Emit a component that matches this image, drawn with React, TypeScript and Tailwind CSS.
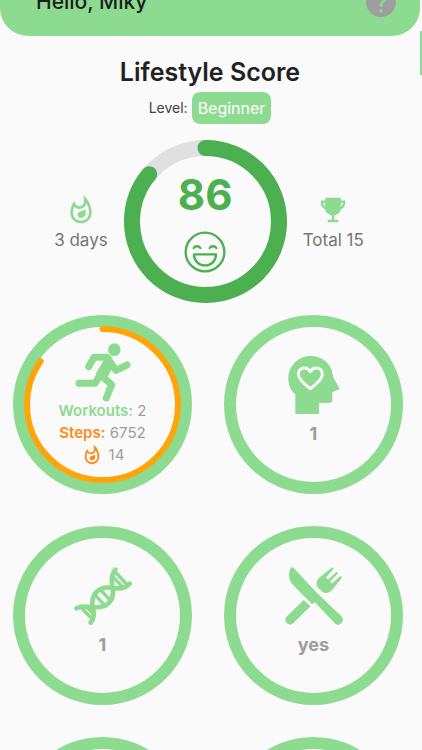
import { ReactNode } from "react";
import { IoTrophySharp } from "react-icons/io5";
import { MdHelp, MdOutlineWhatshot } from "react-icons/md";

type RingProps = {
  size: number;
  stroke: number;
  progress: number;
  color: string;
  track?: string;
};

// Progress ring, starts at the top and goes clockwise
const Ring = ({ size, stroke, progress, color, track }: RingProps) => {
  const r = (size - stroke) / 2;
  const length = 2 * Math.PI * r;
  return (
    <svg
      className="col-start-1 row-start-1"
      width={size}
      height={size}
      viewBox={`0 0 ${size} ${size}`}
      fill="none"
      strokeWidth={stroke}
    >
      {track && <circle cx={size / 2} cy={size / 2} r={r} stroke={track} />}
      <circle
        cx={size / 2}
        cy={size / 2}
        r={r}
        stroke={color}
        strokeLinecap="round"
        strokeDasharray={`${length * progress} ${length}`}
        transform={`rotate(-90 ${size / 2} ${size / 2})`}
      />
    </svg>
  );
};

const LaughIcon = () => (
  <svg
    width="42"
    height="42"
    viewBox="0 0 126 126"
    fill="none"
    stroke="#4caf50"
    strokeWidth="7"
    strokeLinecap="round"
    strokeLinejoin="round"
  >
    <circle cx="63" cy="63" r="58" />
    <path d="M29 51c4-7 16-7 20 0M77 51c4-7 16-7 20 0" />
    <path d="M30 70h66c0 20-14 33-33 33S30 90 30 70z" />
  </svg>
);

const RunnerIcon = () => (
  <svg
    className="-mb-0.5"
    width="56"
    height="59"
    viewBox="224 112 168 177"
    fill="none"
    stroke="#8ddb90"
    strokeWidth="21"
    strokeLinecap="round"
    strokeLinejoin="round"
  >
    <circle cx="342" cy="132" r="19" fill="#8ddb90" stroke="none" />
    <path d="M265 183l16-28h38" />
    <path d="M322 158l25 36 33-16" />
    <path d="M236 233h48l16-26" />
    <path d="M304 211l30 26-16 40" />
    <path
      d="M303 146h17c8 0 13 5 15 12l5 24-20 34-30-2-4-10 24-40z"
      fill="#8ddb90"
      stroke="none"
    />
  </svg>
);

const MindIcon = () => (
  <svg width="52" height="58" viewBox="51 48 156 174" fill="none">
    <path
      d="M73 222v-59c-14-12-21-28-21-47 0-38 29-68 67-68s66 28 67 62l20 37-22 10v22c0 6-4 10-10 10h-30v33z"
      fill="#8ddb90"
    />
    <path
      d="M118 146c-14-11-36-26-36-43 0-12 8-19 18-19 8 0 14 4 18 11 4-7 10-11 18-11 10 0 18 7 18 19 0 17-22 32-36 43z"
      stroke="#fafafa"
      strokeWidth="9"
      strokeLinejoin="round"
    />
  </svg>
);

const DnaIcon = () => (
  <svg
    width="58"
    height="58"
    viewBox="41 35 174 174"
    fill="none"
    stroke="#8ddb90"
    strokeLinecap="round"
  >
    <g strokeWidth="14">
      <path d="M49 159c16-10 32-2 48-4 38 5 66-14 60-57-3-18-6-38 8-55" />
      <path d="M91 202c14-17 9-32 6-47-6-38 18-65 60-57 18 3 37 2 51-13" />
    </g>
    <g strokeWidth="10">
      <path d="M106 121l29 31M121 104l30 32" />
      <path d="M66 161l27 27M82 158l16 17" />
      <path d="M160 67l26 27M165 50l33 36" />
    </g>
  </svg>
);

const MealIcon = () => (
  <svg width="58" height="58" viewBox="12 14 175 176" fill="#8ddb90">
    <path d="M28 18c3-4 7-4 10-1l70 75 74 71c7 7 7 15 1 21-6 7-15 7-21 0l-60-63-8 6-53-53C22 55 20 37 28 18z" />
    <path d="M68 114l21 19-52 51c-6 6-14 6-20 0s-6-14 0-20z" />
    <path d="M153 16c3-2 7 2 5 5l-22 25 7 6 23-22c4-3 8 2 5 5l-23 23 6 6 24-21c4-3 8 2 5 5l-27 34c-9 10-19 14-31 8l-15-15c-6-12-2-22 7-30z" />
  </svg>
);

const Stat = ({ icon, label }: { icon: ReactNode; label: string }) => (
  <div className="flex flex-col items-center text-[17px] leading-6 text-[#757575]">
    <div className="flex h-9 items-center text-[#8ddb90]">{icon}</div>
    <p>{label}</p>
  </div>
);

const Tile = ({ children }: { children?: ReactNode }) => (
  <button className="grid size-[179px] place-items-center rounded-full border-12 border-[#8ddb90]">
    {children}
  </button>
);

const IconTile = ({ icon, value }: { icon: ReactNode; value: string }) => (
  <Tile>
    <div className="flex flex-col items-center pb-1.5">
      <div className="flex h-16 items-start">{icon}</div>
      <p className="text-lg leading-7 font-bold text-[#9e9e9e]">{value}</p>
    </div>
  </Tile>
);

const App = () => {
  return (
    <div className="flex h-screen overflow-hidden bg-[#fafafa] font-['Inter',sans-serif]">
      <main className="min-w-0 flex-1">
        <header className="flex h-9 items-end justify-between rounded-b-[28px] bg-[#8ddb90] pr-[21px] pb-4 pl-9 text-[#1b1f1b]">
          <h2 className="text-[21px] leading-9 font-medium">Hello, Miky</h2>
          <button aria-label="Help" className="text-[#9e9e9e]">
            <MdHelp size={36} />
          </button>
        </header>

        <section className="flex flex-col items-center pt-5">
          <h1 className="text-[25px] leading-8 font-semibold text-[#212121]">
            Lifestyle Score
          </h1>
          <div className="mt-1 flex items-center gap-1 text-sm text-[#424242]">
            <span>Level:</span>
            <span className="rounded-lg bg-[#8ddb90] px-1.5 py-1 text-base leading-6 text-white">
              Beginner
            </span>
          </div>
        </section>

        <section className="mt-4 flex items-center justify-center gap-4 pr-0.5">
          <Stat icon={<MdOutlineWhatshot size={32} />} label="3 days" />
          <div className="grid place-items-center">
            <Ring
              size={163}
              stroke={16}
              progress={0.86}
              color="#4caf50"
              track="#e0e0e0"
            />
            <div className="col-start-1 row-start-1 flex flex-col items-center gap-3">
              <p className="text-[42px] leading-12 font-bold text-[#4caf50]">
                86
              </p>
              <LaughIcon />
            </div>
          </div>
          <Stat icon={<IoTrophySharp size={28} />} label="Total 15" />
        </section>

        <section className="mt-3 grid grid-cols-[auto_auto] justify-center gap-8 pr-1">
          <Tile>
            <div className="-m-1 grid place-items-center">
              <Ring size={157} stroke={6} progress={0.846} color="#ffa50a" />
              <div className="col-start-1 row-start-1 flex flex-col items-center text-[15px] leading-[22px] text-[#9e9e9e]">
                <RunnerIcon />
                <p>
                  <b className="font-semibold text-[#8ddb90]">Workouts:</b> 2
                </p>
                <p>
                  <b className="font-semibold text-[#fb8c1a]">Steps:</b> 6752
                </p>
                <p className="flex items-center gap-1.5">
                  <MdOutlineWhatshot size={22} color="#fb8c1a" />
                  14
                </p>
              </div>
            </div>
          </Tile>
          <IconTile icon={<MindIcon />} value="1" />
          <IconTile icon={<DnaIcon />} value="1" />
          <IconTile icon={<MealIcon />} value="yes" />
          <Tile />
          <Tile />
        </section>
      </main>
      {/* Edge of the next page */}
      <div className="mt-[31px] h-11 w-0.5 bg-[#8ddb90]" />
    </div>
  );
};

export default App;
